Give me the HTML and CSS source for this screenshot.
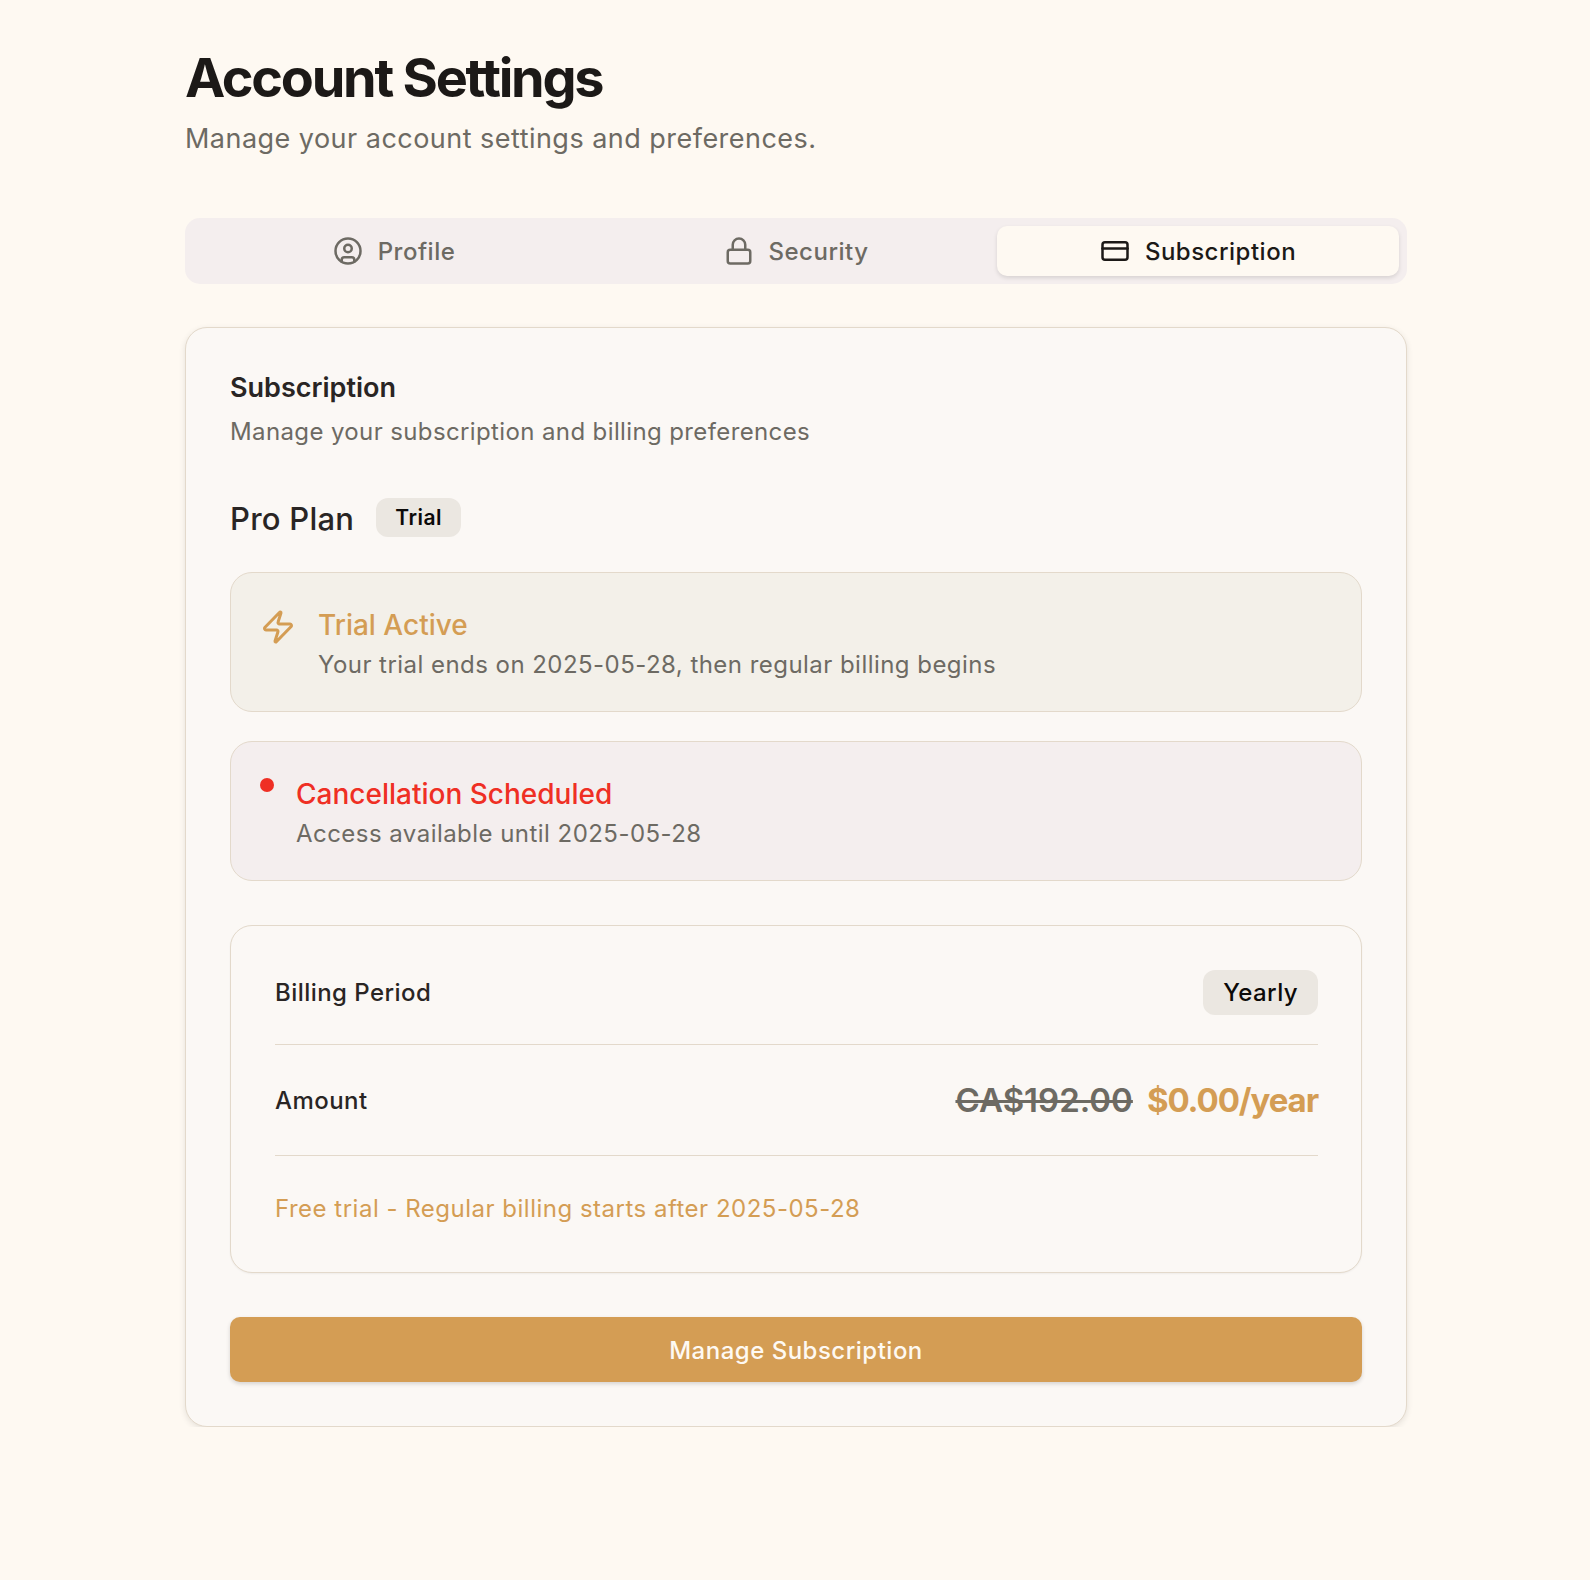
FILE: index.html
```html
<!DOCTYPE html>
<html lang="en">
<head>
<meta charset="UTF-8" />
<meta name="viewport" content="width=device-width, initial-scale=1.0" />
<title>Account Settings</title>
<link rel="stylesheet" href="styles.css">
</head>
<body>
<main class="page">
  <header class="page-head">
    <h1>Account Settings</h1>
    <p>Manage your account settings and preferences.</p>
  </header>

  <!-- tabs -->
  <nav class="tabs">
    <div class="tab">
      <svg class="tab-icon" viewBox="0 0 24 24"><circle cx="12" cy="12" r="10"/><circle cx="12" cy="10" r="3"/><path d="M7 20.662V19a2 2 0 0 1 2-2h6a2 2 0 0 1 2 2v1.662"/></svg>
      <span>Profile</span>
    </div>
    <div class="tab">
      <svg class="tab-icon" viewBox="0 0 24 24"><rect x="3" y="11" width="18" height="11" rx="2"/><path d="M7 11V7a5 5 0 0 1 10 0v4"/></svg>
      <span>Security</span>
    </div>
    <div class="tab active">
      <svg class="tab-icon" viewBox="0 0 24 24"><rect x="2" y="5" width="20" height="14" rx="2"/><path d="M2 10h20"/></svg>
      <span>Subscription</span>
    </div>
  </nav>

  <section class="card">
    <h2>Subscription</h2>
    <p class="card-sub">Manage your subscription and billing preferences</p>

    <div class="plan">
      <h3>Pro Plan</h3>
      <span class="pill pill-sm">Trial</span>
    </div>

    <div class="notice notice-trial">
      <svg class="bolt" viewBox="0 0 24 24"><path d="M4 14a1 1 0 0 1-.78-1.63l9.9-10.2a.5.5 0 0 1 .86.46l-1.92 6.02A1 1 0 0 0 13 10h7a1 1 0 0 1 .78 1.63l-9.9 10.2a.5.5 0 0 1-.86-.46l1.92-6.02A1 1 0 0 0 11 14z"/></svg>
      <div>
        <div class="notice-title trial">Trial Active</div>
        <div class="notice-text">Your trial ends on 2025-05-28, then regular billing begins</div>
      </div>
    </div>

    <div class="notice notice-cancel">
      <span class="dot"></span>
      <div>
        <div class="notice-title cancel">Cancellation Scheduled</div>
        <div class="notice-text">Access available until 2025-05-28</div>
      </div>
    </div>

    <div class="billing">
      <div class="row row-period">
        <span>Billing Period</span>
        <span class="pill">Yearly</span>
      </div>
      <div class="row row-amount">
        <span>Amount</span>
        <span class="prices"><s class="old">CA$192.00</s><b class="new">$0.00/year</b></span>
      </div>
      <p class="billing-note">Free trial - Regular billing starts after 2025-05-28</p>
    </div>

    <button class="manage">Manage Subscription</button>
  </section>
</main>
</body>
</html>
```

FILE: styles.css
```css
*{margin:0;padding:0;box-sizing:border-box}

body{
  background:#fef9f2;color:#1c1917;
  font-family:"Inter",sans-serif;
}
.page{width:1222px;margin:0 0 0 185px;padding:44px 0 0}

/* heading */
.page-head h1{font-size:54px;line-height:67px;font-weight:700;letter-spacing:-2.25px}
.page-head p{font-size:27px;line-height:40px;color:#6d6a63;margin-top:8px;letter-spacing:.47px}

/* tabs */
.tabs{
  display:grid;grid-template-columns:repeat(3,1fr);
  margin-top:59px;padding:8px;border-radius:15px;background:#f4eeee;
}
.tab{
  height:50px;display:flex;align-items:center;justify-content:center;gap:15px;
  font-size:24px;font-weight:450;letter-spacing:.5px;color:#6d6a63;border-radius:10px;
}
.tab.active{background:#fef9f2;color:#1c1917;box-shadow:0 2px 4px rgba(0,0,0,.12)}
.tab-icon{width:30px;height:30px;fill:none;stroke:currentColor;stroke-width:2;stroke-linecap:round;stroke-linejoin:round}

/* card */
.card{
  margin-top:43px;padding:43px 44px 44px;background:#fbf8f5;
  border:1.5px solid #e3d9cb;border-radius:22px;
  box-shadow:0 2px 6px rgba(0,0,0,.1);
}
.card h2{font-size:27px;line-height:33px;font-weight:600;color:#292524}
.card-sub{font-size:24px;line-height:36px;color:#6d6a63;margin-top:10px;letter-spacing:.38px}

.plan{display:flex;align-items:center;gap:22px;margin-top:49px}
.plan h3{font-size:31px;line-height:39px;font-weight:450;color:#292524;letter-spacing:.25px}
.pill{
  background:#ebe7e1;color:#0c0a09;border-radius:12px;
  font-size:24px;font-weight:500;padding:6px 20px;line-height:33px;letter-spacing:.4px;
}
.pill-sm{font-size:21px;line-height:27px;padding:6px 19px;margin-top:-2px;font-weight:600;letter-spacing:.5px}

/* notices */
.notice{
  display:flex;align-items:flex-start;
  border:1.5px solid #e3d9cb;border-radius:22px;height:140px;padding:33px 29px 0;
}
.notice-trial{margin-top:34px;background:#f3f0e9;gap:22px}
.notice-cancel{margin-top:29px;background:#f4eeee;gap:22px}
.bolt{width:36px;height:36px;margin-top:3px;flex:none;fill:none;stroke:#d49d54;stroke-width:2;stroke-linecap:round;stroke-linejoin:round}
.dot{width:14px;height:14px;border-radius:50%;background:#ef2f24;margin-top:3px;flex:none}
.notice-title{font-size:28px;line-height:39px;font-weight:500}
.trial{color:#d49d54}
.cancel{color:#ef2f24}
.notice-text{font-size:24px;line-height:36px;color:#6d6a63;margin-top:2px;letter-spacing:.46px}

/* billing box */
.billing{
  margin-top:44px;padding:44px 43px 44px 44px;height:348px;background:#fbf8f5;
  border:1.5px solid #e3d9cb;border-radius:22px;
  box-shadow:0 1px 2px rgba(0,0,0,.05);
}
.row{display:flex;align-items:center;justify-content:space-between;font-size:24px;font-weight:450;letter-spacing:.45px;color:#292524;border-bottom:1.5px solid #e3d9cb}
.row-period{height:75px;align-items:flex-start}
.row-period span:first-child{line-height:45px}
.row-amount{height:111px}
.prices{display:flex;gap:14px;font-size:33px;font-weight:600;letter-spacing:0}
.old{color:#6d6a63}
.new{color:#d49d54;font-weight:700;letter-spacing:-1.1px}
.billing-note{font-size:24px;line-height:36px;color:#d49d54;margin-top:35px;letter-spacing:.5px}

.manage{
  display:block;width:100%;height:65px;margin-top:44px;padding-top:1px;border:none;border-radius:10px;
  background:#d49d54;color:#fef9f2;font:500 24px "Inter",sans-serif;letter-spacing:.5px;
  box-shadow:0 2px 4px rgba(0,0,0,.15);
}
```
